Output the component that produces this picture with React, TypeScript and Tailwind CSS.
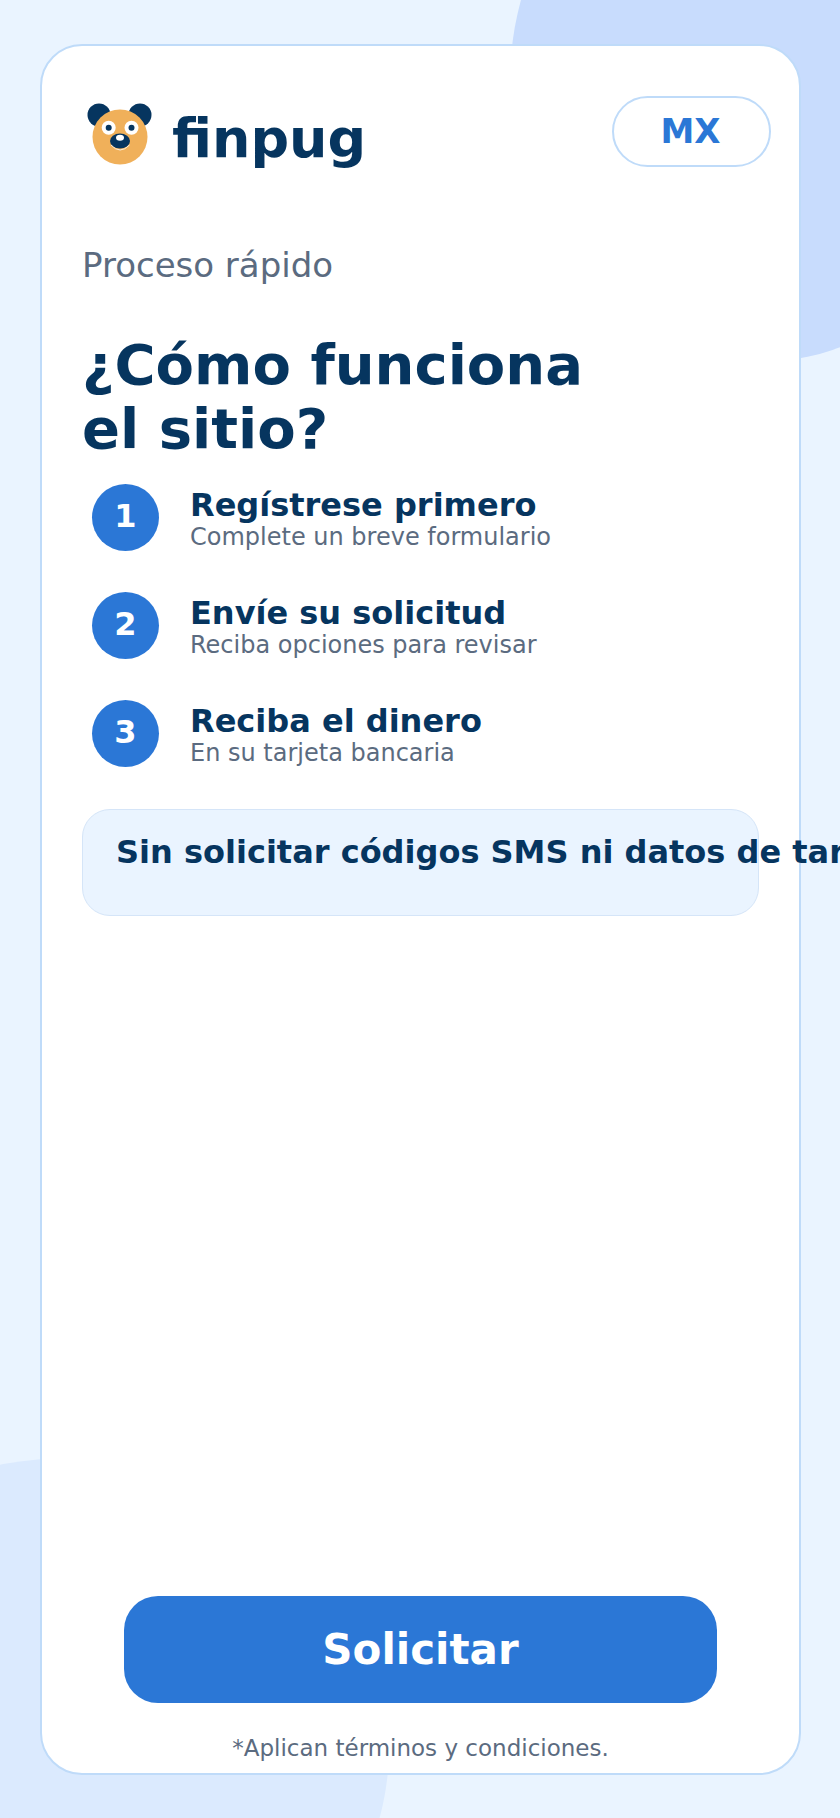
const steps = [
  { n: 1, title: 'Regístrese primero', desc: 'Complete un breve formulario' },
  { n: 2, title: 'Envíe su solicitud', desc: 'Reciba opciones para revisar' },
  { n: 3, title: 'Reciba el dinero', desc: 'En su tarjeta bancaria' },
]

function Mascot() {
  return (
    <svg width="70" height="66" viewBox="0 0 70 66" className="mt-[4px] shrink-0">
      <circle cx="14" cy="15" r="11.5" fill="#06355f" />
      <circle cx="55" cy="15" r="11.5" fill="#06355f" />
      <circle cx="35" cy="37" r="27.5" fill="#f0b05a" />
      <circle cx="23.7" cy="27.7" r="7" fill="#fff" />
      <circle cx="46.5" cy="27.7" r="7" fill="#fff" />
      <circle cx="23.7" cy="27.7" r="3" fill="#06355f" />
      <circle cx="46.5" cy="27.7" r="3" fill="#06355f" />
      <ellipse cx="35" cy="41" rx="10" ry="7.5" fill="#06355f" />
      <ellipse cx="35" cy="37.7" rx="4" ry="3" fill="#fff" />
      <path d="M26 45 Q35 55 44.5 45" fill="none" stroke="#fff" strokeWidth="0.8" />
    </svg>
  )
}

export default function App() {
  return (
    <div className="relative h-[1818px] w-[840px] overflow-hidden bg-[#eaf4ff] font-['DejaVu_Sans',sans-serif]">
      {/* background blobs */}
      <div className="absolute -top-[198px] left-[510px] h-[560px] w-[500px] rounded-[50%] bg-[#c8dcfd]" />
      <div className="absolute -left-[251px] top-[1458px] h-[580px] w-[640px] rounded-[50%] bg-[#dbeafe]" />

      <main className="relative ml-[40px] mt-[44px] flex h-[1731px] w-[761px] flex-col rounded-[42px] border-2 border-[#bfdbf9] bg-white">
        {/* header */}
        <div className="ml-[43px] mr-[28px] mt-[50px] flex items-start justify-between">
          <div className="flex items-start gap-[17px]">
            <Mascot />
            <span className="mt-[11px] text-[54px] font-bold leading-[64px] text-[#06355f]">finpug</span>
          </div>
          <div className="flex h-[71px] w-[159px] items-center justify-center rounded-full border-2 border-[#bfdbf9] pr-[2px] text-[34px] font-bold text-[#2b77d6]">
            MX
          </div>
        </div>

        <p className="ml-[40px] mt-[74px] text-[34px] leading-[40px] text-[#5b6b80]">Proceso rápido</p>
        <h1 className="ml-[40px] mt-[48px] text-[56px] font-bold leading-[64px] text-[#06355f]">
          ¿Cómo funciona
          <br />
          el sitio?
        </h1>

        <div className="ml-[50px] mt-[23px] flex flex-col gap-[41px]">
          {steps.map((s) => (
            <div key={s.n} className="flex h-[67px] items-start gap-[31px]">
              <div className="flex h-[67px] w-[67px] shrink-0 items-center justify-center rounded-full bg-[#2b77d6] pb-[3px] text-[32px] font-bold text-white">
                {s.n}
              </div>
              <div className="pt-[3px]">
                <div className="text-[32px] font-bold leading-[36px] text-[#06355f]">{s.title}</div>
                <div className="text-[24px] leading-[29px] text-[#5b6b80]">{s.desc}</div>
              </div>
            </div>
          ))}
        </div>

        <div className="ml-[40px] mt-[42px] h-[107px] w-[677px] rounded-[28px] border border-[#d5e5f8] bg-[#eaf4ff] pl-[33px] pt-[22px]">
          <p className="whitespace-nowrap text-[32px] font-bold leading-[40px] text-[#06355f]">
            Sin solicitar códigos SMS ni datos de tarjeta
          </p>
        </div>

        {/* cta */}
        <button className="mx-auto mt-auto h-[107px] w-[593px] rounded-[34px] bg-[#2b77d6] text-[42px] font-bold text-white">
          Solicitar
        </button>
        <p className="mb-[10px] mt-[30px] text-center text-[23px] leading-[30px] text-[#5b6b80]">*Aplican términos y condiciones.</p>
      </main>
    </div>
  )
}
